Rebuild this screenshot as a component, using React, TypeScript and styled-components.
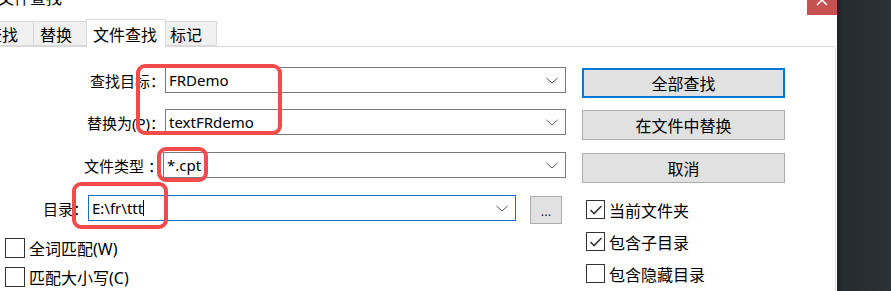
import React from "react";
import styled, { createGlobalStyle } from "styled-components";

const Global = createGlobalStyle`
  html, body { margin: 0; padding: 0; background: #fff; overflow: hidden; }
  body { font-family: "Noto Sans", "Noto Sans CJK SC", sans-serif; color: #000; }
  * { box-sizing: border-box; }
`;

const Screen = styled.div`
  display: flex;
  width: 891px;
  height: 291px;
  overflow: hidden;
`;

const Dialog = styled.div`
  position: relative;
  width: 837px;
  flex: none;
  background: #fff;
  display: flex;
  flex-direction: column;
`;

const Desktop = styled.div`
  flex: 1;
  background: linear-gradient(90deg, #1d2326 0px, #252c30 5px, #2a3236 100%);
`;

const TitleBar = styled.div`
  height: 15px;
  flex: none;
  display: flex;
  justify-content: space-between;
  align-items: flex-start;
  overflow: hidden;
`;

const Title = styled.span`
  font-family: "Noto Sans CJK SC", sans-serif;
  font-size: 16px;
  line-height: 16px;
  margin-top: -11px;
  margin-left: -2px;
`;

const CloseButton = styled.div`
  width: 30px;
  height: 15px;
  background: #c75050;
  svg { display: block; }
`;

const TabStrip = styled.div`
  height: 32px;
  flex: none;
  display: flex;
  align-items: flex-end;
  border-bottom: 1px solid #d9d9d9;
  margin-right: 2px;
`;

const Tab = styled.div<{ $w: number; $active?: boolean; $pl: number; $offset?: number }>`
  position: relative;
  z-index: ${(p) => (p.$active ? 1 : 0)};
  width: ${(p) => p.$w}px;
  margin-left: ${(p) => p.$offset ?? 0}px;
  height: ${(p) => (p.$active ? 28 : 25)}px;
  margin-bottom: ${(p) => (p.$active ? -1 : 0)}px;
  padding-left: ${(p) => p.$pl}px;
  display: flex;
  align-items: center;
  background: ${(p) => (p.$active ? "#fff" : "#f0f0f0")};
  border: 1px solid #d9d9d9;
  border-bottom: ${(p) => (p.$active ? "none" : "1px solid #d9d9d9")};
  margin-right: -1px;
  font-family: "Noto Sans CJK SC", sans-serif;
  font-size: 16px;
  line-height: 16px;
  white-space: nowrap;
  overflow: hidden;
  padding-top: ${(p) => (p.$active ? 0 : 1)}px;
`;

const Panel = styled.div`
  flex: 1;
  display: flex;
  padding-top: 20px;
  border-right: 1px solid #d9d9d9;
  margin-right: 1px;
`;

const LeftCol = styled.div`
  width: 582px;
  flex: none;
  display: flex;
  flex-direction: column;
`;

const RightCol = styled.div`
  width: 203px;
  flex: none;
  display: flex;
  flex-direction: column;
  padding-top: 1px;
`;

const FieldRow = styled.div<{ $mt?: number }>`
  display: flex;
  align-items: flex-start;
  margin-top: ${(p) => p.$mt ?? 0}px;
`;

const Label = styled.div<{ $w: number }>`
  width: ${(p) => p.$w}px;
  flex: none;
  height: 26px;
  display: flex;
  align-items: center;
  justify-content: flex-end;
  font-size: 15px;
  white-space: nowrap;
`;

const Combo = styled.div<{ $w: number; $focus?: boolean }>`
  width: ${(p) => p.$w}px;
  height: 26px;
  flex: none;
  display: flex;
  align-items: center;
  padding: 0 7px 0 3px;
  border: 1px solid ${(p) => (p.$focus ? "#1a6cc0" : "#7a7a7a")};
  background: #fff;
  font-size: 15px;
`;

const ComboText = styled.span`
  flex: 1;
  white-space: nowrap;
  display: flex;
  align-items: center;
`;

const Caret = styled.span`
  display: inline-block;
  width: 1px;
  height: 16px;
  background: #000;
`;

const Chevron = () => (
  <svg width="12" height="7" viewBox="0 0 12 7">
    <polyline points="0.5,1 6,6 11.5,1" fill="none" stroke="#555" strokeWidth="1" />
  </svg>
);

const Browse = styled.div`
  width: 32px;
  height: 28px;
  margin: 1px 0 0 14px;
  background: #e1e1e1;
  border: 1px solid #adadad;
  display: flex;
  align-items: flex-end;
  justify-content: center;
  padding-bottom: 5px;
  font-size: 13px;
  line-height: 13px;
  color: #1a2a5a;
`;

const Checks = styled.div`
  margin: 14px 0 0 5px;
  display: flex;
  flex-direction: column;
  gap: 9px;
`;

const CheckRow = styled.div<{ $size: number }>`
  display: flex;
  align-items: center;
  height: ${(p) => p.$size}px;
  gap: 4px;
  font-size: 16px;
  white-space: nowrap;
`;

const Box = styled.span<{ $size: number }>`
  width: ${(p) => p.$size}px;
  height: ${(p) => p.$size}px;
  flex: none;
  border: 1px solid #333;
  background: #fff;
  display: flex;
  align-items: center;
  justify-content: center;
`;

const Button = styled.div<{ $primary?: boolean; $mt?: number }>`
  height: 30px;
  margin-top: ${(p) => p.$mt ?? 0}px;
  background: #e1e1e1;
  border: ${(p) => (p.$primary ? "2px solid #0078d7" : "1px solid #adadad")};
  display: flex;
  align-items: center;
  justify-content: center;
  font-family: "Noto Sans CJK SC", sans-serif;
  font-size: 16px;
`;

const RightChecks = styled.div`
  margin: 17px 0 0 4px;
  display: flex;
  flex-direction: column;
  gap: 13px;
`;

const Annotation = styled.div<{ $x: number; $y: number; $w: number; $h: number }>`
  position: absolute;
  left: ${(p) => p.$x}px;
  top: ${(p) => p.$y}px;
  width: ${(p) => p.$w}px;
  height: ${(p) => p.$h}px;
  border: 4px solid #f34b4b;
  border-radius: 9px;
  pointer-events: none;
  z-index: 5;
`;

const Tick = () => (
  <svg width="14" height="12" viewBox="0 0 14 12">
    <polyline points="1.5,6 5,9.5 12.5,2" fill="none" stroke="#333" strokeWidth="1.6" />
  </svg>
);

const Check = ({ size, checked, label }: { size: number; checked?: boolean; label: string }) => (
  <CheckRow $size={size}>
    <Box $size={size}>{checked && <Tick />}</Box>
    <span>{label}</span>
  </CheckRow>
);

export default function App() {
  return (
    <>
      <Global />
      <Screen>
        <Dialog>
          <TitleBar>
            <Title>文件查找</Title>
            <CloseButton>
              <svg width="30" height="15" viewBox="0 0 30 15">
                <line x1="10" y1="-5" x2="20" y2="5" stroke="#fff" strokeWidth="1.6" />
                <line x1="20" y1="-5" x2="10" y2="5" stroke="#fff" strokeWidth="1.6" />
              </svg>
            </CloseButton>
          </TitleBar>
          <TabStrip>
            <Tab $w={50} $pl={1} $offset={-16}>查找</Tab>
            <Tab $w={54} $pl={6}>替换</Tab>
            <Tab $w={80} $active $pl={6}>文件查找</Tab>
            <Tab $w={52} $pl={4}>标记</Tab>
          </TabStrip>
          <Panel>
            <LeftCol>
              <FieldRow>
                <Label $w={165}>查找目标：</Label>
                <Combo $w={401}>
                  <ComboText>FRDemo</ComboText>
                  <Chevron />
                </Combo>
              </FieldRow>
              <FieldRow $mt={16}>
                <Label $w={165}>替换为(P)：</Label>
                <Combo $w={401}>
                  <ComboText>textFRdemo</ComboText>
                  <Chevron />
                </Combo>
              </FieldRow>
              <FieldRow $mt={17}>
                <Label $w={163}>文件类型 ：</Label>
                <Combo $w={403}>
                  <ComboText>*.cpt</ComboText>
                  <Chevron />
                </Combo>
              </FieldRow>
              <FieldRow $mt={17}>
                <Label $w={88}>目录：</Label>
                <Combo $w={428} $focus>
                  <ComboText>
                    E:\fr\ttt<Caret />
                  </ComboText>
                  <Chevron />
                </Combo>
                <Browse>...</Browse>
              </FieldRow>
              <Checks>
                <Check size={20} label="全词匹配(W)" />
                <Check size={20} label="匹配大小写(C)" />
              </Checks>
            </LeftCol>
            <RightCol>
              <Button $primary>全部查找</Button>
              <Button $mt={12}>在文件中替换</Button>
              <Button $mt={13}>取消</Button>
              <RightChecks>
                <Check size={19} checked label="当前文件夹" />
                <Check size={19} checked label="包含子目录" />
                <Check size={19} label="包含隐藏目录" />
              </RightChecks>
            </RightCol>
          </Panel>
          <Annotation $x={136} $y={64} $w={146} $h={71} />
          <Annotation $x={157} $y={147} $w={51} $h={35} />
          <Annotation $x={72} $y={182} $w={96} $h={47} />
        </Dialog>
        <Desktop />
      </Screen>
    </>
  );
}
